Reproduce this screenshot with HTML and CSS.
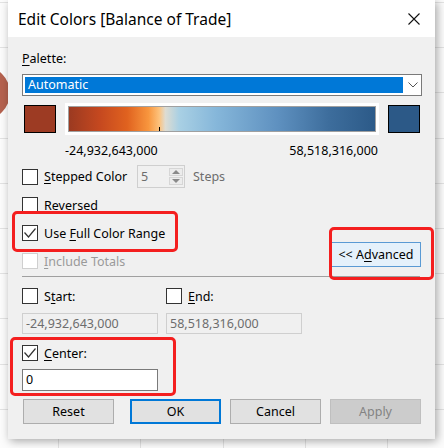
FILE: index.html
```html
<!DOCTYPE html>
<html>
<head>
<meta charset="utf-8">
<link rel="stylesheet" href="styles.css">
</head>
<body>
<div class="blob"></div>
<div class="dialog">
  <div class="titlebar">
    <span class="title">Edit Colors [Balance of Trade]</span>
    <svg class="close" width="12" height="12" viewBox="0 0 12 12"><path d="M0.5 0.5L11.5 11.5M11.5 0.5L0.5 11.5" stroke="#111" stroke-width="1.1" fill="none"/></svg>
  </div>
  <div class="content">
    <div class="palette-label"><u>P</u>alette:</div>
    <div class="select">
      <div class="select-value">Automatic</div>
      <svg class="chevron" width="10" height="6" viewBox="0 0 10 6"><path d="M0.5 0.5L5 5L9.5 0.5" stroke="#555" stroke-width="1" fill="none"/></svg>
    </div>
    <div class="ramp-row">
      <div class="swatch swatch-neg"></div>
      <div class="ramp-frame"><div class="ramp"><span class="tick"></span></div></div>
      <div class="swatch swatch-pos"></div>
    </div>
    <div class="range-labels"><span>-24,932,643,000</span><span>58,518,316,000</span></div>
    <div class="options">
      <div class="option-col">
        <div class="check-row stepped">
          <span class="checkbox"></span>
          <span class="stepped-label"><u>S</u>tepped Color</span>
          <div class="spin">
            <span class="spin-val">5</span>
            <div class="spin-btns">
              <span class="spin-btn"><svg width="8" height="4" viewBox="0 0 8 4"><path d="M0 4L4 0L8 4Z" fill="#8a8a8a"/></svg></span>
              <span class="spin-btn"><svg width="8" height="4" viewBox="0 0 8 4"><path d="M0 0L4 4L8 0Z" fill="#8a8a8a"/></svg></span>
            </div>
          </div>
          <span class="steps">Steps</span>
        </div>
        <div class="check-row"><span class="checkbox"></span><span>Reversed</span></div>
        <div class="check-row"><span class="checkbox"><svg width="14" height="14" viewBox="0 0 14 14"><path d="M1.5 6.5L5.5 11L12.5 2.5" stroke="#333" stroke-width="1.2" fill="none"/></svg></span><span>Use <u>F</u>ull Color Range</span></div>
        <div class="check-row disabled"><span class="checkbox"></span><span><u>I</u>nclude Totals</span></div>
      </div>
      <button class="btn btn-advanced">&lt;&lt; A<u>d</u>vanced</button>
    </div>
    <div class="separator"></div>
    <div class="range-grid">
      <div class="check-row"><span class="checkbox"></span><span>S<u>t</u>art:</span></div>
      <div class="check-row"><span class="checkbox"></span><span><u>E</u>nd:</span></div>
      <div class="field field-disabled">-24,932,643,000</div>
      <div class="field field-disabled">58,518,316,000</div>
    </div>
    <div class="check-row center-row"><span class="checkbox"><svg width="14" height="14" viewBox="0 0 14 14"><path d="M1.5 6.5L5.5 11L12.5 2.5" stroke="#333" stroke-width="1.2" fill="none"/></svg></span><span><u>C</u>enter:</span></div>
    <div class="field center-field">0</div>
    <div class="buttons">
      <button class="btn btn-reset">Reset</button>
      <button class="btn btn-ok">OK</button>
      <button class="btn">Cancel</button>
      <button class="btn btn-apply">Apply</button>
    </div>
  </div>
  <div class="callout callout-full"></div>
  <div class="callout callout-adv"></div>
  <div class="callout callout-center"></div>
</div>
</body>
</html>
```

FILE: styles.css
```css
* { box-sizing: border-box; }
html, body { margin: 0; padding: 0; }
body {
  width: 444px;
  height: 448px;
  overflow: hidden;
  position: relative;
  font-family: "Noto Sans", "Open Sans", sans-serif;
  font-size: 12.5px;
  color: #000;
  background-color: #fcfcfc;
  background-image:
    repeating-linear-gradient(to bottom, transparent 0 2px, #e3e3e3 2px 3px, transparent 3px 45.2px),
    repeating-linear-gradient(to right, transparent 0 58px, #e3e3e3 58px 59px, transparent 59px 82.3px);
}
.blob {
  position: absolute;
  left: -44px;
  top: 66px;
  width: 54px;
  height: 54px;
  border-radius: 50%;
  background: #b5624f;
  z-index: 0;
}
.dialog {
  position: relative;
  z-index: 1;
  margin-left: 8px;
  width: 427px;
  height: 439px;
  background: #f0f0f0;
  box-shadow: 2px 2px 9px rgba(0, 0, 0, 0.35);
  display: flex;
  flex-direction: column;
}
.titlebar {
  height: 37px;
  flex: none;
  background: #fff;
  display: flex;
  align-items: center;
  justify-content: space-between;
  padding: 0 15px 0 10px;
}
.title { font-size: 15.5px; }
.close { display: block; margin-top: 1px; }
.content {
  display: flex;
  flex-direction: column;
  padding: 0 13px 0 14px;
}
u { text-decoration-thickness: 1px; text-underline-offset: 2px; }
.palette-label {
  margin-top: 14px;
  height: 16px;
  line-height: 16px;
}
.select {
  margin-top: 7px;
  height: 22px;
  border: 1px solid #7a7a7a;
  background: #fff;
  padding: 2px;
  display: flex;
  align-items: center;
}
.select-value {
  width: 378px;
  height: 16px;
  background: #0078d7;
  color: #fff;
  line-height: 16px;
  padding-left: 3px;
}
.chevron { margin-left: 5px; }
.ramp-row {
  margin-top: 7px;
  height: 32px;
  display: flex;
  align-items: center;
  gap: 9px;
  padding-left: 2px;
}
.swatch {
  width: 32px;
  height: 28px;
  border: 1px solid #000;
}
.swatch-neg { background: #9d3b23; }
.swatch-pos { background: #2c5987; }
.ramp-frame {
  width: 314px;
  height: 32px;
  background: #fff;
  padding: 3px;
}
.ramp {
  position: relative;
  height: 100%;
  border: 1px solid #a0a0a0;
  background: linear-gradient(to right, #9b3a21 0%, #c5481f 10%, #e0621f 19%, #f8963e 26%, #fdc27c 29.5%, #dedcd2 31.5%, #a9d0e4 36%, #86b7da 48%, #5f91c0 68%, #3d6d9c 85%, #2c5a88 100%);
}
.tick {
  position: absolute;
  left: 90px;
  bottom: 0;
  width: 1px;
  height: 4px;
  background: #000;
}
.range-labels {
  margin-top: 8px;
  height: 16px;
  line-height: 16px;
  display: flex;
  justify-content: space-between;
  padding: 0 44px 0 43px;
}
.options {
  margin-top: 6px;
  display: flex;
  align-items: flex-end;
}
.option-col {
  display: flex;
  flex-direction: column;
}
.check-row {
  height: 28px;
  display: flex;
  align-items: center;
  gap: 6px;
}
.check-row.stepped { height: 23px; margin-bottom: 3px; }
.checkbox {
  flex: none;
  width: 16px;
  height: 16px;
  border: 1px solid #333;
  background: #fff;
  display: flex;
  align-items: center;
  justify-content: center;
}
.disabled { color: #9a9a9a; }
.disabled .checkbox { border-color: #cfcfcf; }
.stepped-label { width: 87px; }
.spin {
  width: 48px;
  height: 23px;
  border: 1px solid #cfcfcf;
  background: #f0f0f0;
  display: flex;
  align-items: center;
  justify-content: space-between;
  padding: 0 1px 0 3px;
  color: #6d6d6d;
}
.spin-btns {
  display: flex;
  flex-direction: column;
  gap: 1px;
}
.spin-btn {
  width: 14px;
  height: 8px;
  border: 1px solid #d6d6d6;
  background: #ececec;
  display: flex;
  align-items: center;
  justify-content: center;
}
.spin-btn svg { display: block; }
.steps { color: #6d6d6d; margin-left: 2px; }
.btn {
  font-family: inherit;
  font-size: 12.5px;
  color: #000;
  height: 25px;
  width: 91px;
  padding: 0;
  border: 1px solid #adadad;
  background: #e1e1e1;
}
.btn-advanced {
  margin-left: auto;
  margin-right: 1px;
  margin-bottom: 8px;
  width: 90px;
  background: #e5f1fb;
  border-color: #5a9ad4;
}
.separator {
  margin-top: 1px;
  height: 1px;
  background: #a0a0a0;
  margin-right: 2px;
}
.range-grid {
  margin-top: 7px;
  display: grid;
  grid-template-columns: 144px 136px;
  grid-template-rows: 24px 21px;
  row-gap: 5px;
}
.range-grid .check-row { height: 24px; }
.field {
  height: 21px;
  width: 136px;
  line-height: 19px;
  padding-left: 3px;
  border: 1px solid #cfcfcf;
}
.field-disabled { color: #6d6d6d; background: #f0f0f0; }
.center-row { margin-top: 7px; height: 24px; }
.center-field {
  margin-top: 4px;
  height: 22px;
  line-height: 20px;
  background: #fff;
  border-color: #7a7a7a;
}
.buttons {
  margin-top: 8px;
  display: flex;
  gap: 9px;
  padding-left: 1px;
}
.btn-reset { margin-right: 7px; }
.btn-ok { border: 2px solid #0078d7; }
.btn-apply { background: #cccccc; border-color: #bfbfbf; color: #838383; }
.callout {
  position: absolute;
  border: 3px solid #f41f1f;
  border-radius: 5px;
  pointer-events: none;
}
.callout-full { left: 4px; top: 211px; width: 166px; height: 41px; }
.callout-adv { left: 321px; top: 227px; width: 105px; height: 53px; }
.callout-center { left: 2px; top: 337px; width: 166px; height: 59px; }
```
